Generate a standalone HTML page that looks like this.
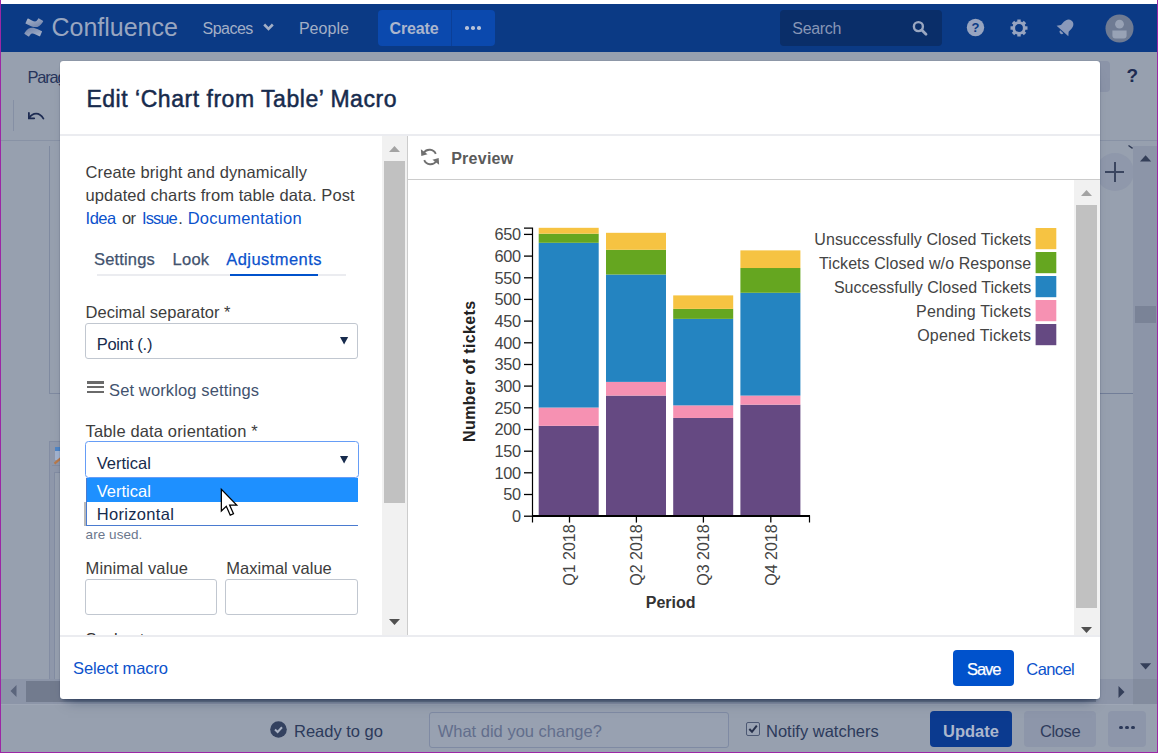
<!DOCTYPE html>
<html lang="en">
<head>
<meta charset="utf-8">
<title>Edit 'Chart from Table' Macro - Confluence</title>
<style>
*{box-sizing:border-box;margin:0;padding:0}
html,body{width:1158px;height:753px;overflow:hidden;background:#97a0af}
body{font-family:"Liberation Sans",sans-serif;font-size:16px;color:#333;position:relative}
.a{position:absolute}
.t{position:absolute;white-space:nowrap;line-height:20px;height:20px}
svg{position:absolute;overflow:visible}
#frame{position:absolute;left:0;top:0;width:1158px;height:753px;background:#97a0af;overflow:hidden}
#nav{position:absolute;left:0;top:4px;width:1158px;height:48px;background:#0b3a85}
#nav .t{color:#a3afc6}
#dlg{position:absolute;left:60px;top:61px;width:1040px;height:638px;background:#fff;border-radius:3px;box-shadow:0 0 1px rgba(9,30,66,.55),0 9px 12px -8px rgba(9,30,66,.5),0 4px 4px -3px rgba(9,30,66,.45)}
.lnk{color:#0b52cc}
.lbl{color:#333}
.field{position:absolute;background:#fff;border:1px solid #c1c7d0;border-radius:3px}
</style>
</head>
<body>
<div id="frame">
<div class="a" style="left:0px;top:140px;width:1158px;height:1px;background:#8892a5;"></div>
<span class="t" style="left:27.6px;top:67.1px;font-size:16.5px;color:#27355c;letter-spacing:-1.25px;">Paragraph</span>
<div class="a" style="left:13px;top:100px;width:1px;height:31px;background:#858fa4;"></div>
<svg style="left:27px;top:108.7px" width="18" height="14" viewBox="0 0 18 14"><path d="M1.9 4 L1.9 9.3 L7.2 9.3" fill="none" stroke="#1d2b52" stroke-width="1.8" stroke-linecap="round"/><path d="M2.4 8.8 C5.8 3.4 12.4 3 16.4 9.6" fill="none" stroke="#1d2b52" stroke-width="1.8" stroke-linecap="round"/></svg>
<div class="a" style="left:49px;top:146px;width:1px;height:248px;background:#7f8aa0;"></div>
<div class="a" style="left:49px;top:393px;width:12px;height:1px;background:#7f8aa0;"></div>
<div class="a" style="left:49px;top:441px;width:12px;height:238px;background:#8f98ab;border-left:1px solid #838da3;border-top:1px solid #838da3;"></div>
<div class="a" style="left:54px;top:472px;width:7px;height:207px;background:#97a0af;border-left:1px solid #838da3;border-top:1px solid #838da3;"></div>
<div class="a" style="left:55px;top:447px;width:6px;height:4px;background:#4f86c6;"></div>
<div class="a" style="left:55px;top:451px;width:6px;height:9px;background:#a3b4cf;"></div>
<svg style="left:54px;top:455px" width="7" height="11"><path d="M0.5 8.6 L6.5 3.4" stroke="#b97a4a" stroke-width="2.2" fill="none"/></svg>
<div class="a" style="left:52px;top:465px;width:9px;height:1px;background:#838da3;"></div>
<div class="a" style="left:1100px;top:393px;width:33px;height:1px;background:#727e98;"></div>
<div class="a" style="left:1090px;top:61px;width:20px;height:31px;background:#8b94a8;border-radius:4px;"></div>
<span class="t" style="left:1126.5px;top:66.4px;font-size:19px;color:#1d2b52;font-weight:bold;">?</span>
<div class="a" style="left:1096px;top:153px;width:38px;height:38px;background:#8f98ab;border-radius:50%;"></div>
<div class="a" style="left:1105px;top:171px;width:19px;height:2px;background:#3b4660;"></div>
<div class="a" style="left:1114px;top:162px;width:2px;height:20px;background:#3b4660;"></div>
<div class="a" style="left:1133px;top:146px;width:24px;height:533px;background:#8c95a8;"></div>
<div class="a" style="left:1135px;top:306px;width:21px;height:17px;background:#7a8397;"></div>
<svg style="left:1139.8px;top:155.4px" width="12" height="7"><path d="M0 6.5 L5.6 0.3 L11.2 6.5Z" fill="#343f59"/></svg>
<svg style="left:1139.8px;top:662.8px" width="12" height="7"><path d="M0 0.3 L5.6 6.5 L11.2 0.3Z" fill="#343f59"/></svg>
<svg style="left:1128.4px;top:145.4px" width="6" height="5"><path d="M0.5 0.5 L4.6 3.4" stroke="#2c3753" stroke-width="1.4" fill="none"/></svg>
<div class="a" style="left:0px;top:679px;width:1133px;height:25px;background:#8c95a8;"></div>
<div class="a" style="left:1133px;top:679px;width:24px;height:25px;background:#838c9e;"></div>
<div class="a" style="left:26px;top:681px;width:1070px;height:21px;background:#727b8e;"></div>
<svg style="left:10px;top:685px" width="7" height="12"><path d="M6.5 0 L0.5 6 L6.5 12Z" fill="#5b657c"/></svg>
<svg style="left:1118px;top:686px" width="7" height="12"><path d="M0.5 0 L6.5 6 L0.5 12Z" fill="#343f59"/></svg>
<div class="a" style="left:0px;top:704px;width:1133px;height:1px;background:#9ea6b5;"></div>
<svg style="left:269.5px;top:721px" width="17" height="17" viewBox="0 0 17 17"><circle cx="8.5" cy="8.5" r="8.3" fill="#33415f"/><path d="M5 8.6 L7.6 11 L12 6.2" fill="none" stroke="#a9b2c4" stroke-width="2"/></svg>
<span class="t" style="left:294.0px;top:720.5px;font-size:16.5px;color:#2c3a5b;">Ready to go</span>
<div class="a" style="left:429px;top:712px;width:300px;height:36px;background:#98a1b1;border:1px solid #7f8aa3;border-radius:3px;"></div>
<span class="t" style="left:437.7px;top:720.5px;font-size:16.5px;color:#626e8c;">What did you change?</span>
<div class="a" style="left:746px;top:722px;width:14px;height:14px;background:#9aa3b3;border:1px solid #4c5873;border-radius:2px;"></div>
<svg style="left:747px;top:723px" width="12" height="12" viewBox="0 0 12 12"><path d="M2.3 6 L5 8.8 L9.8 2.6" fill="none" stroke="#26304a" stroke-width="2"/></svg>
<span class="t" style="left:766.0px;top:720.5px;font-size:16.5px;color:#2c3a5b;">Notify watchers</span>
<div class="a" style="left:930px;top:711px;width:82px;height:36px;background:#0b3a8f;border-radius:4px;"></div>
<span class="t" style="left:943.0px;top:720.5px;font-size:16.5px;color:#acb7cd;font-weight:bold;">Update</span>
<div class="a" style="left:1024px;top:711px;width:72px;height:36px;background:#8d96aa;border-radius:4px;"></div>
<span class="t" style="left:1040.0px;top:720.5px;font-size:16.5px;color:#2f3c5d;letter-spacing:-0.397px;">Close</span>
<div class="a" style="left:1108px;top:711px;width:38px;height:36px;background:#8d96aa;border-radius:4px;"></div>
<div class="a" style="left:1119px;top:725.6px;width:3.7px;height:3.7px;background:#2b3858;border-radius:50%;"></div>
<div class="a" style="left:1125px;top:725.6px;width:3.7px;height:3.7px;background:#2b3858;border-radius:50%;"></div>
<div class="a" style="left:1131px;top:725.6px;width:3.7px;height:3.7px;background:#2b3858;border-radius:50%;"></div>
<div id="nav"></div>
<svg style="left:24.4px;top:17.7px" width="19.8" height="19" viewBox="0.5 0.2 34.5 33.2"><defs><linearGradient id="lg1" x1="0.9" y1="1" x2="0.3" y2="0.2"><stop offset="0" stop-color="#a9b4ca"/><stop offset="1" stop-color="#7b8cb0"/></linearGradient><linearGradient id="lg2" x1="0.1" y1="0" x2="0.7" y2="0.8"><stop offset="0" stop-color="#a9b4ca"/><stop offset="1" stop-color="#7b8cb0"/></linearGradient></defs><path d="M2.23 24.27c-.33.54-.7 1.17-1 1.68a1 1 0 0 0 .34 1.37l6.67 4.1a1 1 0 0 0 1.39-.34c.27-.45.61-1.03.99-1.65 2.64-4.36 5.3-3.83 10.09-1.54l6.61 3.14a1 1 0 0 0 1.34-.49l3.18-7.18a1 1 0 0 0-.49-1.31c-1.4-.66-4.18-1.97-6.68-3.17-9-4.37-16.65-4.09-22.44 5.39z" fill="url(#lg1)" transform="translate(0,1)"/><path d="M32.77 9.02c.33-.54.7-1.17 1-1.68a1 1 0 0 0-.34-1.37L26.76 1.87a1 1 0 0 0-1.39.34c-.27.45-.61 1.03-.99 1.65-2.64 4.36-5.3 3.83-10.09 1.54L7.7 2.27a1 1 0 0 0-1.34.49L3.18 9.94a1 1 0 0 0 .49 1.31c1.4.66 4.18 1.97 6.68 3.17 9 4.36 16.65 4.08 22.42-5.4z" fill="url(#lg2)" transform="translate(0,-1)"/></svg>
<span class="t" style="left:51.5px;top:13.3px;font-size:25px;height:28px;line-height:28px;color:#99a6c0;letter-spacing:-0.019px;">Confluence</span>
<span class="t" style="left:202.6px;top:18.9px;font-size:16px;color:#a3afc6;letter-spacing:-0.541px;">Spaces</span>
<svg style="left:262.6px;top:23.4px" width="11" height="8" viewBox="0 0 11 8"><path d="M1.2 1.5 L5.5 5.8 L9.8 1.5" fill="none" stroke="#a3afc6" stroke-width="2.6"/></svg>
<span class="t" style="left:298.9px;top:18.9px;font-size:16px;color:#a3afc6;letter-spacing:0.049px;">People</span>
<div class="a" style="left:378px;top:10px;width:117px;height:36px;background:#0b49ae;border-radius:4px;"></div>
<div class="a" style="left:451px;top:10px;width:1px;height:36px;background:#0b3f98;"></div>
<span class="t" style="left:389.5px;top:18.9px;font-size:16px;color:#abb6cd;font-weight:bold;letter-spacing:-0.148px;">Create</span>
<div class="a" style="left:465.3px;top:26.3px;width:3.6px;height:3.6px;background:#b6c1d8;border-radius:50%;"></div>
<div class="a" style="left:471.2px;top:26.3px;width:3.6px;height:3.6px;background:#b6c1d8;border-radius:50%;"></div>
<div class="a" style="left:477.1px;top:26.3px;width:3.6px;height:3.6px;background:#b6c1d8;border-radius:50%;"></div>
<div class="a" style="left:780px;top:10px;width:162px;height:36px;background:#0a2e69;border-radius:4px;"></div>
<span class="t" style="left:792.3px;top:18.9px;font-size:16px;color:#8796b6;letter-spacing:-0.31px;">Search</span>
<svg style="left:911.2px;top:19.2px" width="18" height="18" viewBox="0 0 18 18"><circle cx="7.4" cy="7.6" r="4.5" fill="none" stroke="#9aa7c1" stroke-width="2.4"/><path d="M10.8 11 L15 15.2" stroke="#9aa7c1" stroke-width="2.8" stroke-linecap="round"/></svg>
<svg style="left:966px;top:18px" width="19" height="19" viewBox="0 0 19 19"><circle cx="9.5" cy="9.5" r="8.7" fill="#97a4c0"/><text x="9.5" y="14.3" text-anchor="middle" font-family="Liberation Sans, sans-serif" font-weight="bold" font-size="13" fill="#0b3a85">?</text></svg>
<svg style="left:1009px;top:17.6px" width="20" height="20" viewBox="-10 -10 20 20"><rect x="-1.7" y="-8.5" width="3.4" height="4" fill="#97a4c0" transform="rotate(0)"/><rect x="-1.7" y="-8.5" width="3.4" height="4" fill="#97a4c0" transform="rotate(45)"/><rect x="-1.7" y="-8.5" width="3.4" height="4" fill="#97a4c0" transform="rotate(90)"/><rect x="-1.7" y="-8.5" width="3.4" height="4" fill="#97a4c0" transform="rotate(135)"/><rect x="-1.7" y="-8.5" width="3.4" height="4" fill="#97a4c0" transform="rotate(180)"/><rect x="-1.7" y="-8.5" width="3.4" height="4" fill="#97a4c0" transform="rotate(225)"/><rect x="-1.7" y="-8.5" width="3.4" height="4" fill="#97a4c0" transform="rotate(270)"/><rect x="-1.7" y="-8.5" width="3.4" height="4" fill="#97a4c0" transform="rotate(315)"/><circle r="5.3" fill="none" stroke="#97a4c0" stroke-width="2.8"/></svg>
<svg style="left:1054px;top:16px" width="24" height="24" viewBox="-12 -12 24 24"><g transform="translate(-0.2,-0.7) rotate(42) scale(0.92)"><path d="M0 -9.6 C-3.6 -9.6 -5.6 -6.8 -5.6 -3 L-5.6 1.6 L-8.6 5.4 L8.6 5.4 L5.6 1.6 L5.6 -3 C5.6 -6.8 3.6 -9.6 0 -9.6Z" fill="#8a99ba"/><path d="M-2.4 6.6 A2.4 2.4 0 0 0 2.4 6.6Z" fill="#8a99ba"/></g></svg>
<svg style="left:1105.1px;top:13.8px" width="29" height="29" viewBox="0 0 29 29"><circle cx="14.5" cy="14.5" r="14" fill="#6f7b93"/><circle cx="14.5" cy="10.2" r="4.4" fill="#98a2b5"/><path d="M7.4 16.6 H21.6 V21.6 Q21.6 24.6 18.6 24.6 H10.4 Q7.4 24.6 7.4 21.6Z" fill="#98a2b5"/></svg>
<div id="dlg"></div>
<span class="t" style="left:86.4px;top:85.3px;font-size:23px;height:28px;line-height:28px;color:#172b4d;letter-spacing:0.527px;-webkit-text-stroke:0.5px #172b4d;">Edit ‘Chart from Table’ Macro</span>
<div class="a" style="left:60px;top:134px;width:1040px;height:2px;background:#ebecf0;"></div>
<div class="a" style="left:60px;top:635px;width:1040px;height:2px;background:#ebecf0;"></div>
<span class="t" style="left:85.6px;top:161.9px;font-size:16.5px;color:#3d3d3d;letter-spacing:0.109px;">Create bright and dynamically</span>
<span class="t" style="left:85.6px;top:184.9px;font-size:16.5px;color:#3d3d3d;letter-spacing:0.087px;">updated charts from table data. Post</span>
<span class="t" style="left:85.6px;top:207.7px;font-size:16.5px;color:#0b52cc;letter-spacing:-0.521px;">Idea</span>
<span class="t" style="left:122.1px;top:207.7px;font-size:16.5px;color:#3d3d3d;letter-spacing:-0.781px;">or</span>
<span class="t" style="left:142.1px;top:207.7px;font-size:16.5px;color:#0b52cc;letter-spacing:-0.964px;">Issue</span>
<span class="t" style="left:178.2px;top:207.7px;font-size:16.5px;color:#3d3d3d;">.</span>
<span class="t" style="left:187.7px;top:207.7px;font-size:16.5px;color:#0b52cc;letter-spacing:0.241px;">Documentation</span>
<span class="t" style="left:94.0px;top:248.6px;font-size:16.5px;color:#42526e;letter-spacing:0.157px;-webkit-text-stroke:0.25px #42526e;">Settings</span>
<span class="t" style="left:172.5px;top:248.6px;font-size:16.5px;color:#42526e;letter-spacing:0.263px;-webkit-text-stroke:0.25px #42526e;">Look</span>
<span class="t" style="left:226.3px;top:248.6px;font-size:16.5px;color:#0b52cc;letter-spacing:0.438px;-webkit-text-stroke:0.25px #0b52cc;">Adjustments</span>
<div class="a" style="left:97px;top:274px;width:249px;height:2px;background:#ebecf0;"></div>
<div class="a" style="left:230px;top:273.7px;width:88px;height:2.3px;background:#0052cc;"></div>
<span class="t" style="left:85.6px;top:302.3px;font-size:16.5px;color:#3d3d3d;">Decimal separator *</span>
<div class="field" style="left:85px;top:323px;width:273px;height:36px"></div>
<span class="t" style="left:96.7px;top:334.0px;font-size:16.5px;color:#172b4d;letter-spacing:-0.257px;">Point (.)</span>
<svg style="left:339.8px;top:337px" width="9" height="9"><path d="M0 0 H8.2 L4.1 7.6Z" fill="#172b4d"/></svg>
<div class="a" style="left:87px;top:381.2px;width:17px;height:2.6px;background:#6a6a6a;"></div>
<div class="a" style="left:87px;top:385.8px;width:17px;height:2.6px;background:#6a6a6a;"></div>
<div class="a" style="left:87px;top:390.6px;width:17px;height:2.6px;background:#6a6a6a;"></div>
<span class="t" style="left:109.0px;top:380.4px;font-size:16.5px;color:#42526e;letter-spacing:0.13px;">Set worklog settings</span>
<span class="t" style="left:85.6px;top:421.3px;font-size:16.5px;color:#3d3d3d;letter-spacing:0.141px;">Table data orientation *</span>
<div class="field" style="left:84.6px;top:440.8px;width:274px;height:37.6px;border:1.6px solid #669df6;border-radius:3.5px"></div>
<span class="t" style="left:96.7px;top:453.0px;font-size:16.5px;color:#172b4d;">Vertical</span>
<svg style="left:339.8px;top:456px" width="9" height="9"><path d="M0 0 H8.2 L4.1 7.6Z" fill="#172b4d"/></svg>
<div class="a" style="left:84px;top:502px;width:2px;height:24px;background:#b9b9b9"></div><div class="a" style="left:86px;top:478px;width:272px;height:48px;background:#fff;border:1px solid #4a7bd0;border-top:none;border-right:none"></div>
<div class="a" style="left:87px;top:478.4px;width:271px;height:23.2px;background:#1e90ff;"></div>
<span class="t" style="left:96.7px;top:481.0px;font-size:16.5px;color:#fff;">Vertical</span>
<span class="t" style="left:96.7px;top:504.0px;font-size:16.5px;color:#172b4d;letter-spacing:0.327px;">Horizontal</span>
<span class="t" style="left:85.6px;top:525.1px;font-size:13.5px;color:#6b778c;letter-spacing:0.059px;">are used.</span>
<span class="t" style="left:85.6px;top:557.8px;font-size:16.5px;color:#3d3d3d;letter-spacing:0.122px;">Minimal value</span>
<span class="t" style="left:226.3px;top:557.8px;font-size:16.5px;color:#3d3d3d;">Maximal value</span>
<div class="field" style="left:85px;top:579px;width:132px;height:36px"></div>
<div class="field" style="left:225px;top:579px;width:133px;height:36px"></div>
<div class="a" style="left:80px;top:620px;width:300px;height:15px;overflow:hidden"><span class="t" style="left:5.6px;top:8.5px;font-size:16.5px;color:#333">Scale step</span></div>
<div class="a" style="left:382px;top:136px;width:25px;height:499px;background:#f1f1f1;"></div>
<div class="a" style="left:384px;top:161px;width:21px;height:342px;background:#c1c1c1;"></div>
<svg style="left:389px;top:145.5px" width="11" height="6"><path d="M0 6 L5.5 0 L11 6Z" fill="#a3a3a3"/></svg>
<svg style="left:389px;top:619px" width="11" height="6"><path d="M0 0 L5.5 6 L11 0Z" fill="#505050"/></svg>
<div class="a" style="left:407px;top:136px;width:1px;height:499px;background:#cccccc;"></div>
<svg style="left:420.3px;top:146.8px" width="20" height="20" viewBox="0 0 18 18"><path d="M14.2 6.2 A6.2 6.2 0 0 0 3.4 5.2" fill="none" stroke="#707070" stroke-width="1.7"/><path d="M0.8 2 L1.2 8 L6.8 6.6Z" fill="#707070"/><path d="M3.8 11.8 A6.2 6.2 0 0 0 14.6 12.8" fill="none" stroke="#707070" stroke-width="1.7"/><path d="M17.2 16 L16.8 10 L11.2 11.4Z" fill="#707070"/></svg>
<span class="t" style="left:451.2px;top:148.7px;font-size:16px;color:#5a5a5a;font-weight:bold;letter-spacing:0.249px;">Preview</span>
<div class="a" style="left:408px;top:179px;width:692px;height:1px;background:#cccccc;"></div>
<div class="a" style="left:1074px;top:180px;width:26px;height:455px;background:#f1f1f1;"></div>
<div class="a" style="left:1076px;top:205px;width:21px;height:403px;background:#c1c1c1;"></div>
<svg style="left:1081px;top:189.6px" width="11" height="6"><path d="M0 6 L5.5 0 L11 6Z" fill="#a3a3a3"/></svg>
<svg style="left:1081px;top:626.8px" width="11" height="6"><path d="M0 0 L5.5 6 L11 0Z" fill="#505050"/></svg>
<span class="t" style="left:73.0px;top:658.4px;font-size:16.5px;color:#0b52cc;letter-spacing:-0.121px;">Select macro</span>
<div class="a" style="left:953px;top:650px;width:61px;height:36px;background:#0052cc;border-radius:4px;"></div>
<span class="t" style="left:967.0px;top:659.3px;font-size:16.5px;color:#fff;letter-spacing:-1.031px;-webkit-text-stroke:0.25px #fff;">Save</span>
<span class="t" style="left:1026.3px;top:659.3px;font-size:16.5px;color:#0b52cc;letter-spacing:-0.577px;">Cancel</span>
<svg style="left:0;top:0" width="1158" height="753" viewBox="0 0 1158 753" font-family="Liberation Sans, sans-serif">
<rect x="538.7" y="425.79" width="60" height="89.41" fill="#654982"/>
<rect x="538.7" y="407.54" width="60" height="18.26" fill="#f691b2"/>
<rect x="538.7" y="242.81" width="60" height="164.73" fill="#2484c1"/>
<rect x="538.7" y="233.68" width="60" height="9.13" fill="#65a620"/>
<rect x="538.7" y="227.81" width="60" height="5.87" fill="#f6c342"/>
<rect x="606.0" y="395.58" width="60" height="119.62" fill="#654982"/>
<rect x="606.0" y="381.89" width="60" height="13.69" fill="#f691b2"/>
<rect x="606.0" y="274.53" width="60" height="107.36" fill="#2484c1"/>
<rect x="606.0" y="249.76" width="60" height="24.78" fill="#65a620"/>
<rect x="606.0" y="232.81" width="60" height="16.95" fill="#f6c342"/>
<rect x="673.2" y="417.97" width="60" height="97.23" fill="#654982"/>
<rect x="673.2" y="405.36" width="60" height="12.60" fill="#f691b2"/>
<rect x="673.2" y="318.87" width="60" height="86.50" fill="#2484c1"/>
<rect x="673.2" y="308.87" width="60" height="10.00" fill="#65a620"/>
<rect x="673.2" y="295.40" width="60" height="13.47" fill="#f6c342"/>
<rect x="740.4" y="404.67" width="60" height="110.53" fill="#654982"/>
<rect x="740.4" y="395.58" width="60" height="9.08" fill="#f691b2"/>
<rect x="740.4" y="292.79" width="60" height="102.79" fill="#2484c1"/>
<rect x="740.4" y="268.01" width="60" height="24.78" fill="#65a620"/>
<rect x="740.4" y="250.37" width="60" height="17.65" fill="#f6c342"/>
<path d="M524 228.2 H532.5 V516" fill="none" stroke="#000" stroke-width="1.2"/>
<line x1="524" x2="532.5" y1="516.2" y2="516.2" stroke="#000" stroke-width="1.3"/>
<text x="520.6" y="522.1" text-anchor="end" font-size="16.3" letter-spacing="-0.35" fill="#444">0</text>
<line x1="524" x2="532.5" y1="494.5" y2="494.5" stroke="#000" stroke-width="1.3"/>
<text x="520.6" y="500.4" text-anchor="end" font-size="16.3" letter-spacing="-0.35" fill="#444">50</text>
<line x1="524" x2="532.5" y1="472.8" y2="472.8" stroke="#000" stroke-width="1.3"/>
<text x="520.6" y="478.7" text-anchor="end" font-size="16.3" letter-spacing="-0.35" fill="#444">100</text>
<line x1="524" x2="532.5" y1="451.2" y2="451.2" stroke="#000" stroke-width="1.3"/>
<text x="520.6" y="457.1" text-anchor="end" font-size="16.3" letter-spacing="-0.35" fill="#444">150</text>
<line x1="524" x2="532.5" y1="429.5" y2="429.5" stroke="#000" stroke-width="1.3"/>
<text x="520.6" y="435.4" text-anchor="end" font-size="16.3" letter-spacing="-0.35" fill="#444">200</text>
<line x1="524" x2="532.5" y1="407.8" y2="407.8" stroke="#000" stroke-width="1.3"/>
<text x="520.6" y="413.7" text-anchor="end" font-size="16.3" letter-spacing="-0.35" fill="#444">250</text>
<line x1="524" x2="532.5" y1="386.1" y2="386.1" stroke="#000" stroke-width="1.3"/>
<text x="520.6" y="392.0" text-anchor="end" font-size="16.3" letter-spacing="-0.35" fill="#444">300</text>
<line x1="524" x2="532.5" y1="364.5" y2="364.5" stroke="#000" stroke-width="1.3"/>
<text x="520.6" y="370.4" text-anchor="end" font-size="16.3" letter-spacing="-0.35" fill="#444">350</text>
<line x1="524" x2="532.5" y1="342.8" y2="342.8" stroke="#000" stroke-width="1.3"/>
<text x="520.6" y="348.7" text-anchor="end" font-size="16.3" letter-spacing="-0.35" fill="#444">400</text>
<line x1="524" x2="532.5" y1="321.1" y2="321.1" stroke="#000" stroke-width="1.3"/>
<text x="520.6" y="327.0" text-anchor="end" font-size="16.3" letter-spacing="-0.35" fill="#444">450</text>
<line x1="524" x2="532.5" y1="299.4" y2="299.4" stroke="#000" stroke-width="1.3"/>
<text x="520.6" y="305.3" text-anchor="end" font-size="16.3" letter-spacing="-0.35" fill="#444">500</text>
<line x1="524" x2="532.5" y1="277.8" y2="277.8" stroke="#000" stroke-width="1.3"/>
<text x="520.6" y="283.7" text-anchor="end" font-size="16.3" letter-spacing="-0.35" fill="#444">550</text>
<line x1="524" x2="532.5" y1="256.1" y2="256.1" stroke="#000" stroke-width="1.3"/>
<text x="520.6" y="262.0" text-anchor="end" font-size="16.3" letter-spacing="-0.35" fill="#444">600</text>
<line x1="524" x2="532.5" y1="234.4" y2="234.4" stroke="#000" stroke-width="1.3"/>
<text x="520.6" y="240.3" text-anchor="end" font-size="16.3" letter-spacing="-0.35" fill="#444">650</text>
<path d="M532.5 522.6 V516 H809.5 V522.6" fill="none" stroke="#000" stroke-width="1.2"/>
<rect x="532" y="515" width="278" height="2" fill="#000"/>
<line x1="569.5" x2="569.5" y1="516" y2="522.6" stroke="#000" stroke-width="1.3"/>
<text transform="translate(575.3,524.4) rotate(-90)" text-anchor="end" font-size="16" fill="#444">Q1 2018</text>
<line x1="636.4" x2="636.4" y1="516" y2="522.6" stroke="#000" stroke-width="1.3"/>
<text transform="translate(642.2,524.4) rotate(-90)" text-anchor="end" font-size="16" fill="#444">Q2 2018</text>
<line x1="703.4" x2="703.4" y1="516" y2="522.6" stroke="#000" stroke-width="1.3"/>
<text transform="translate(709.2,524.4) rotate(-90)" text-anchor="end" font-size="16" fill="#444">Q3 2018</text>
<line x1="770.8" x2="770.8" y1="516" y2="522.6" stroke="#000" stroke-width="1.3"/>
<text transform="translate(776.6,524.4) rotate(-90)" text-anchor="end" font-size="16" fill="#444">Q4 2018</text>
<text transform="translate(475.1,371.2) rotate(-90)" text-anchor="middle" font-size="16" letter-spacing="0.37" font-weight="bold" fill="#222">Number of tickets</text>
<text x="670.7" y="607.5" text-anchor="middle" font-size="16" font-weight="bold" fill="#333">Period</text>
<rect x="1035.6" y="228.0" width="20.7" height="21.2" fill="#f6c342"/>
<text x="1031.3" y="245.1" text-anchor="end" font-size="16" letter-spacing="0.06" fill="#444">Unsuccessfully Closed Tickets</text>
<rect x="1035.6" y="252.0" width="20.7" height="21.2" fill="#65a620"/>
<text x="1031.3" y="269.1" text-anchor="end" font-size="16" letter-spacing="0.075" fill="#444">Tickets Closed w/o Response</text>
<rect x="1035.6" y="276.0" width="20.7" height="21.2" fill="#2484c1"/>
<text x="1031.3" y="293.1" text-anchor="end" font-size="16" letter-spacing="0" fill="#444">Successfully Closed Tickets</text>
<rect x="1035.6" y="300.0" width="20.7" height="21.2" fill="#f691b2"/>
<text x="1031.3" y="317.1" text-anchor="end" font-size="16" letter-spacing="0.15" fill="#444">Pending Tickets</text>
<rect x="1035.6" y="324.0" width="20.7" height="21.2" fill="#654982"/>
<text x="1031.3" y="341.1" text-anchor="end" font-size="16" letter-spacing="0.21" fill="#444">Opened Tickets</text>
</svg>
<svg style="left:220.2px;top:488px" width="19.8" height="28.8" viewBox="0 0 22 32"><path d="M1.5 1.5 V25.5 L7 20.3 L11.4 30.2 L15 28.6 L10.7 19 H18.6Z" fill="#fff" stroke="#000" stroke-width="1.4" stroke-linejoin="miter"/></svg>
<div class="a" style="left:0px;top:0px;width:1158px;height:4px;background:#fff;"></div>
<div class="a" style="left:0px;top:0px;width:1px;height:753px;background:#9c27a5;"></div>
<div class="a" style="left:1157px;top:0px;width:1px;height:753px;background:#9c27a5;"></div>
<div class="a" style="left:0px;top:752px;width:1158px;height:1px;background:#9c27a5;"></div>
</div>
</body>
</html>
